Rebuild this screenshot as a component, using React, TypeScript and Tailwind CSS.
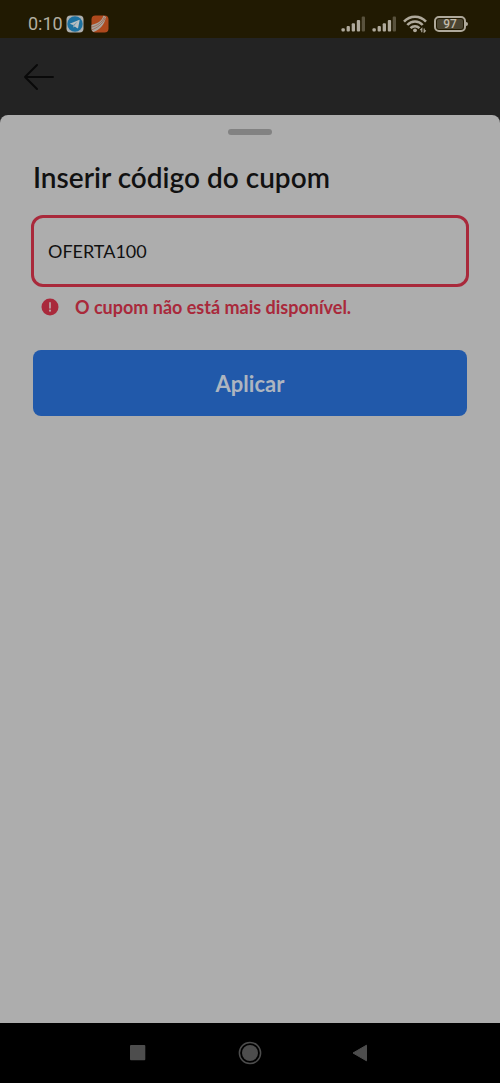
import { useState } from "react";

function Signal() {
  return (
    <svg width="24" height="16" viewBox="0 0 24 16" aria-hidden="true" fill="#afa99b">
      <rect x="0.5" y="12.2" width="3.3" height="3.3" rx="1" />
      <rect x="5.6" y="10" width="3.3" height="5.5" rx="1" />
      <rect x="10.7" y="7.3" width="3.3" height="8.2" rx="1" />
      <rect x="15.8" y="4" width="3.3" height="11.5" rx="1" />
      <rect x="20.7" y="0.5" width="3.3" height="15" rx="1" fill="#59523d" />
    </svg>
  );
}

function Wifi() {
  return (
    <svg width="24" height="18" viewBox="0 0 24 18" aria-hidden="true" fill="none" stroke="#afa99b" strokeWidth="2.5">
      <path d="M1 6.7C7 .1 17 .1 23 6.7M4.3 10C8.6 5.3 15.4 5.3 19.7 10M7.5 13.2C10 10.5 14 10.5 16.5 13.2" />
      <circle cx="12" cy="15.3" r="1.9" fill="#afa99b" stroke="none" />
      <path d="M18.8 17.2v-3.6l-1.6 1.6M21.2 13.4V17l1.6-1.6" strokeWidth="1.2" />
    </svg>
  );
}

function Battery() {
  return (
    <div className="flex items-center" role="img" aria-label="Bateria 97%">
      <div className="flex h-4 w-8 items-center justify-center rounded-[5px] border-2 border-[#afa99b] p-px">
        <span className="flex h-full w-full items-center justify-center rounded-xs bg-[#4b4532] text-[12px] leading-none font-medium text-[#c0baaa]">
          97
        </span>
      </div>
      <span className="h-1 w-0.5 rounded-r-xs bg-[#afa99b]" />
    </div>
  );
}

function StatusBar() {
  return (
    <div className="flex h-[38px] items-center justify-between bg-[#211a02] pt-2.5 pr-8 pl-7 font-['Roboto',sans-serif]">
      <div className="flex items-center gap-[3px]">
        <span className="text-[18px] leading-5 text-[#b3aea0]">0:10</span>
        <svg width="18" height="18" viewBox="0 0 18 18" aria-hidden="true">
          <rect x=".5" y=".5" width="17" height="17" rx="4" fill="#aeb0af" />
          <circle cx="9" cy="9" r="7.7" fill="#1c71a0" />
          <path d="m3.7 8.7 9.2-3.8c.5-.2.8.1.7.6l-1.5 7.4c-.1.5-.5.6-.9.3l-2.4-1.8-1.3 1.2-.5-2.7z" fill="#b7bfc2" />
          <path d="m7.1 9.9 4.7-3.4-3.4 4-.9 2.1z" fill="#6495af" />
        </svg>
        <svg className="ml-1" width="18" height="18" viewBox="0 0 18 18" aria-hidden="true">
          <clipPath id="app-shape"><rect x=".5" y=".5" width="17" height="17" rx="4" /></clipPath>
          <g clipPath="url(#app-shape)">
            <rect width="18" height="18" fill="#ae491d" />
            <path d="M0 10C6 9 11 6 12.5 .5L15 2C13.5 10 9 14.5 2.5 17L0 16z" fill="#aaa49e" />
            <path d="M0 12.2C6 11 11 7.5 13.5 2M0 15C6 13.3 11.5 9 14.3 3" fill="none" stroke="#9b5a40" strokeWidth=".7" />
          </g>
        </svg>
      </div>
      <div className="flex items-center gap-[7px]">
        <Signal />
        <Signal />
        <Wifi />
        <Battery />
      </div>
    </div>
  );
}

function NavigationBar() {
  return (
    <nav className="flex h-[60px] items-center justify-center gap-[88px] bg-black text-[#4d4d4d]" aria-label="Sistema">
      <button type="button" aria-label="Recentes" className="flex size-6 items-center justify-center">
        <svg width="16" height="16" aria-hidden="true"><rect width="15.3" height="15.3" rx="1" fill="currentColor" /></svg>
      </button>
      <button type="button" aria-label="Início" className="flex size-6 items-center justify-center">
        <svg width="24" height="24" viewBox="0 0 24 24" aria-hidden="true">
          <circle cx="12" cy="12" r="10.6" fill="none" stroke="currentColor" strokeWidth="1.5" />
          <circle cx="12" cy="12" r="8" fill="currentColor" />
        </svg>
      </button>
      <button type="button" aria-label="Voltar do sistema" className="flex size-6 items-center justify-start">
        <svg width="18" height="18" viewBox="0 0 18 18" aria-hidden="true">
          <path d="M16.5 1.2v15.6L3 9z" fill="currentColor" stroke="currentColor" strokeLinejoin="round" />
        </svg>
      </button>
    </nav>
  );
}

export default function App() {
  const [code, setCode] = useState("OFERTA100");

  return (
    <div className="flex min-h-screen flex-col bg-[#232323] font-['Lato',sans-serif]">
      <StatusBar />
      <header className="flex h-[77px] items-center px-6">
        <button type="button" aria-label="Voltar">
          <svg width="30" height="26" viewBox="0 0 30 26" aria-hidden="true" fill="none" stroke="#090909" strokeWidth="1.9" strokeLinecap="round" strokeLinejoin="round">
            <path d="M29 13H1M13 1 1 13l12 12" />
          </svg>
        </button>
      </header>
      <main className="flex flex-1 flex-col rounded-t-lg bg-[#adadad] px-[33px] pt-3.5">
        <div className="h-[6px] w-11 self-center rounded-full bg-[#828282]" />
        <form className="flex flex-col" onSubmit={(event) => event.preventDefault()}>
          <label htmlFor="coupon" className="mt-6 text-[28px] leading-9 font-semibold text-[#111111]">
            Inserir código do cupom
          </label>
          <input
            id="coupon"
            value={code}
            onChange={(event) => setCode(event.target.value)}
            aria-invalid="true"
            aria-describedby="coupon-error"
            className="-mx-0.5 mt-5 h-[72px] rounded-xl border-3 border-[#a9293b] bg-transparent px-3.5 text-[18px] text-[#111111] outline-none"
          />
          <div id="coupon-error" role="alert" className="mt-2 flex items-center gap-4 pl-2 text-[18px] leading-6 font-bold text-[#a9293b]">
            <svg width="18" height="18" viewBox="0 0 18 18" aria-hidden="true">
              <circle cx="9" cy="9" r="8.5" fill="#a9293b" />
              <path d="M9 4.8v5" stroke="#b9a4a7" strokeWidth="1.7" strokeLinecap="round" />
              <circle cx="9" cy="12.7" r="1.1" fill="#b9a4a7" />
            </svg>
            <span>O cupom não está mais disponível.</span>
          </div>
          <button type="submit" className="mt-[31px] h-[66px] rounded-lg bg-[#2159aa] text-[22px] font-bold text-[#adb5c0]">
            Aplicar
          </button>
        </form>
      </main>
      <NavigationBar />
    </div>
  );
}
